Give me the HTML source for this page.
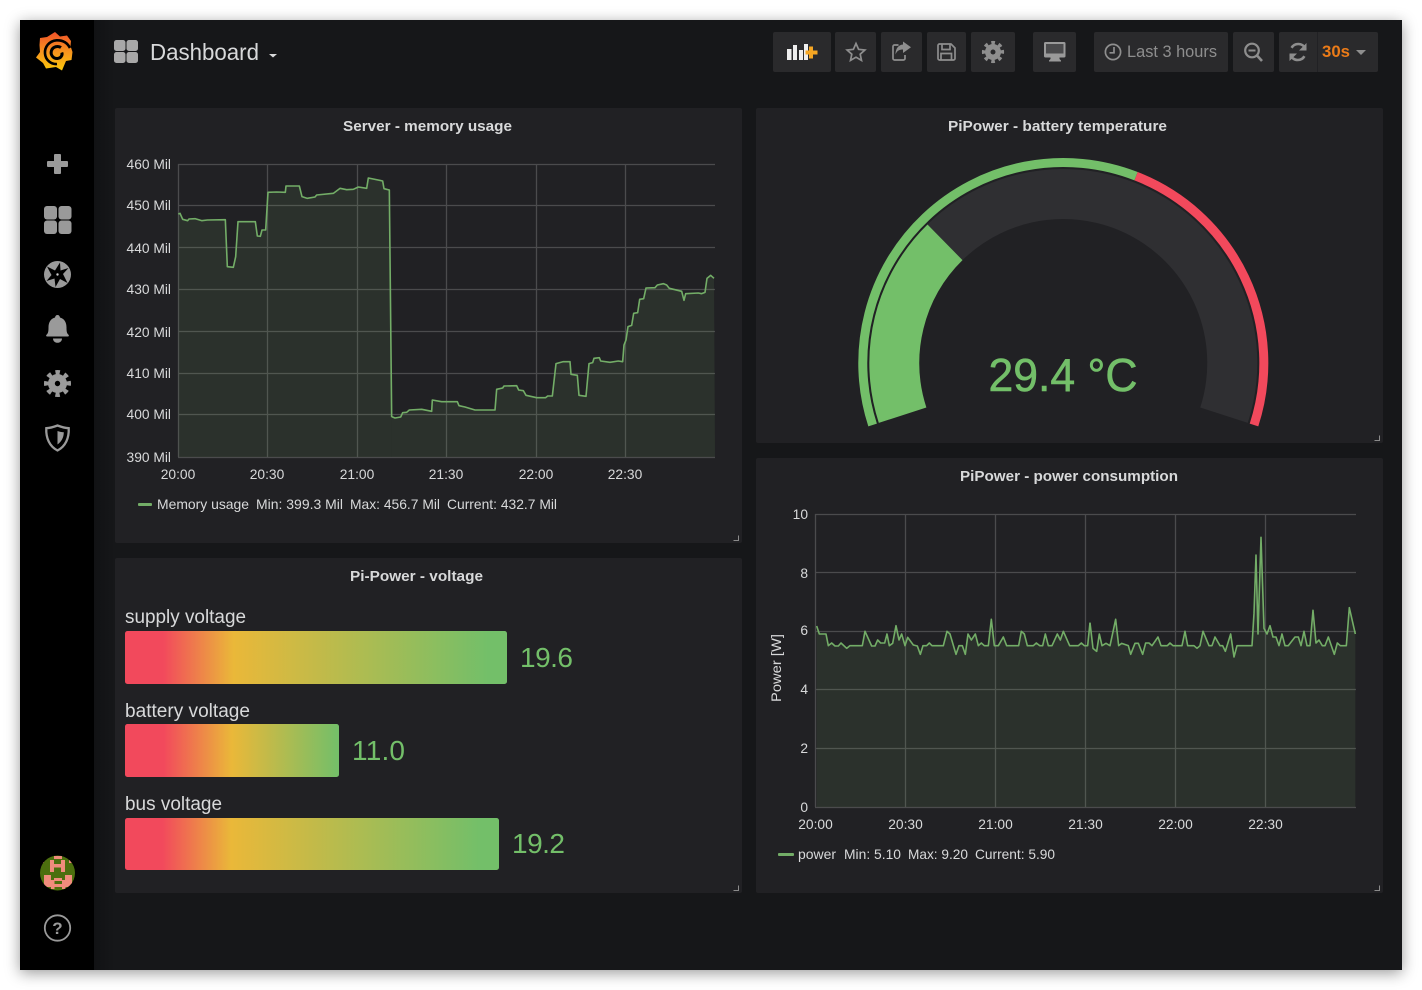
<!DOCTYPE html>
<html><head><meta charset="utf-8"><title>Dashboard</title>
<style>
html,body{margin:0;padding:0;background:#fff;width:1422px;height:990px;overflow:hidden}
#w{position:absolute;left:20px;top:20px;width:1382px;height:950px;background:#161719;box-shadow:0 3px 14px rgba(0,0,0,.4)}
svg{position:absolute;left:0;top:0;font-family:"Liberation Sans",sans-serif}
.t{font-size:15px;font-weight:bold;fill:#d8d9da;text-anchor:middle}
.a{font-size:13.8px;fill:#d8d9da}
.e{text-anchor:end}.m{text-anchor:middle}
.g{stroke:#4b4b4d;stroke-width:1.3;fill:none}
.l{fill:none;stroke:#73ad67;stroke-width:1.6;vector-effect:non-scaling-stroke;stroke-linejoin:round}
.f{fill:#7eb26d;fill-opacity:.11;stroke:none}
.b{fill:#2a2a2c}
.i{fill:#9a9a9a}
.o{fill:none;stroke:#8e8e8e;stroke-width:1.7}
.h{fill:none;stroke:#8a8a8a;stroke-width:1}
</style></head><body>
<div id="w"></div>
<svg width="1422" height="990" viewBox="0 0 1422 990">
<defs>
<linearGradient id="lg" gradientUnits="userSpaceOnUse" x1="0" y1="32" x2="0" y2="71"><stop offset="0" stop-color="#f0522a"/><stop offset=".5" stop-color="#f7931e"/><stop offset="1" stop-color="#fbca0a"/></linearGradient>
<linearGradient id="sb"><stop offset="0" stop-color="#111214"/><stop offset="1" stop-color="#161719"/></linearGradient>
<linearGradient id="b1"><stop offset="0" stop-color="#f2495c"/><stop offset=".1" stop-color="#f2495c"/><stop offset=".284" stop-color="#eab839"/><stop offset=".95" stop-color="#73bf69"/><stop offset="1" stop-color="#73bf69"/></linearGradient>
<linearGradient id="b2"><stop offset="0" stop-color="#f2495c"/><stop offset=".18" stop-color="#f2495c"/><stop offset=".5" stop-color="#eab839"/><stop offset="1" stop-color="#73bf69"/></linearGradient>
<clipPath id="av"><circle cx="57.5" cy="873" r="17.5"/></clipPath>
</defs>

<rect x="20" y="20" width="74" height="950" fill="#000"/>
<rect x="94" y="20" width="21" height="950" fill="url(#sb)"/>

<!-- logo -->
<polygon fill="url(#lg)" points="55,32 60,36.5 67,35.500 71,41 70.500,46 72.500,52 71.500,60 66,61 62,70.500 56,67 46,68.500 43,63 36,57.500 40,52 39.500,45 40,38 47,37"/>
<path d="M70 48C67 42 62 40 56.500 40.300C49 41 44.500 47 45 53.500C45.500 60 51 64.500 57 64" fill="none" stroke="#000" stroke-width="2.600"/>
<path d="M61 47.500C58 45.500 53 46.500 51.500 50.500C50 55 53.500 58.800 57.500 58.500C61 58.200 62.800 55 61.800 52.500" fill="none" stroke="#000" stroke-width="3"/>

<!-- sidebar icons -->
<path class="i" d="M55 154h5a1 1 0 0 1 1 1v6h6a1 1 0 0 1 1 1v4a1 1 0 0 1-1 1h-6v6a1 1 0 0 1-1 1h-5a1 1 0 0 1-1-1v-6h-6a1 1 0 0 1-1-1v-4a1 1 0 0 1 1-1h6v-6a1 1 0 0 1 1-1z"/>
<g class="i"><rect x="44" y="206" width="13" height="13.500" rx="3"/><rect x="58.500" y="206" width="13" height="13.500" rx="3"/><rect x="44" y="220.500" width="13" height="13.500" rx="3"/><rect x="58.500" y="220.500" width="13" height="13.500" rx="3"/></g>
<circle class="i" cx="57.500" cy="274.500" r="13.500"/>
<path fill="#000" d="M60 262.500L60.500 270.500 68.500 268 63 274 67.500 283 60 279 55.500 287 54.500 278.500 46.500 281 51.500 275 47 266.500 55 270.500z"/>
<circle cx="57.500" cy="274.500" r="1.200" fill="#ccc"/>
<path class="i" d="M57.500 315c-1.500 0-2.200 1-2.500 2.500-4.500 1.200-6.500 5-6.500 10 0 3.500-.3 5.500-1.500 6.800-.8.800-1 1.400-.8 1.700.2.400.7.500 1.300.5h20c.6 0 1.100-.1 1.300-.5.200-.3 0-.9-.8-1.700-1.200-1.300-1.500-3.300-1.500-6.800 0-5-2-8.800-6.500-10-.3-1.500-1-2.500-2.500-2.500z"/>
<path class="i" d="M53 338.500h9c0 2.600-2 4.300-4.500 4.300s-4.500-1.700-4.500-4.300z"/>
<circle class="i" cx="57.500" cy="383.500" r="9.500"/>
<circle cx="57.500" cy="383.500" r="11.200" fill="none" stroke="#9a9a9a" stroke-width="4.600" stroke-dasharray="4.300 4.500"  transform="rotate(-12 57.500 383.500)"/>
<circle cx="57.500" cy="383.500" r="2.700" fill="#000"/>
<path d="M57.500 425.500C53 427.200 50 428 46.300 428.200C45.800 438 49.500 446.500 57.500 450.500C65.500 446.500 69.200 438 68.700 428.200C65 428 62 427.200 57.500 425.500Z" fill="none" stroke="#9a9a9a" stroke-width="2.300"/>
<path class="i" d="M57.500 431v13.500c4-2.800 6.300-7 6.300-12.200-2.300-.2-4.300-.6-6.300-1.300z"/>
<circle cx="57.500" cy="873" r="17.500" fill="#4c6f0e"/>
<g clip-path="url(#av)" fill="#f08c7c">
<rect x="50" y="860" width="4" height="12"/><rect x="61" y="860" width="4" height="12"/><rect x="50" y="864" width="15" height="3.500"/>
<rect x="44" y="875" width="7" height="12"/><rect x="65" y="875" width="7" height="12"/>
<rect x="51" y="880" width="3.500" height="9"/><rect x="54" y="878" width="8" height="3"/><rect x="54" y="884" width="8" height="3"/><rect x="62" y="880" width="3.500" height="9"/>
<rect x="40" y="860" width="4" height="3"/><rect x="69" y="860" width="5" height="3"/><rect x="54" y="856" width="8" height="3"/>
</g>
<circle cx="57.500" cy="928" r="12.700" fill="none" stroke="#9a9a9a" stroke-width="1.800"/>
<text x="57.500" y="934" font-size="17" font-weight="bold" fill="#9a9a9a" text-anchor="middle">?</text>

<!-- header -->
<g fill="#a8a8a8"><rect x="114" y="40" width="11.500" height="11" rx="2.500"/><rect x="126.500" y="40" width="11.500" height="11" rx="2.500"/><rect x="114" y="52" width="11.500" height="11" rx="2.500"/><rect x="126.500" y="52" width="11.500" height="11" rx="2.500"/></g>
<text x="150" y="60" font-size="23" fill="#d8d9da" textLength="109" lengthAdjust="spacingAndGlyphs">Dashboard</text>
<path d="M269 54h8l-4 3.500z" fill="#d8d9da"/>

<g class="b">
<rect x="773" y="32" width="58" height="40" rx="2"/>
<rect x="835" y="32" width="41" height="40" rx="2"/>
<rect x="881" y="32" width="41" height="40" rx="2"/>
<rect x="927" y="32" width="39" height="40" rx="2"/>
<rect x="971" y="32" width="44" height="40" rx="2"/>
<rect x="1033" y="32" width="43" height="40" rx="2"/>
<rect x="1094" y="32" width="134" height="40" rx="2"/>
<rect x="1233" y="32" width="41" height="40" rx="2"/>
<rect x="1279" y="32" width="99" height="40" rx="2"/>
</g>
<rect x="1317" y="32" width="1" height="40" fill="#212124"/>
<g fill="#eee"><rect x="787" y="49" width="4.500" height="11"/><rect x="793" y="45" width="4" height="15"/><rect x="799" y="50" width="4" height="10"/><rect x="804" y="44" width="4" height="16"/></g>
<path fill="#f5a623" d="M809 46.500h4v4h4.500v4h-4.500v4h-4v-4h-3.500v-4h3.500z"/>
<path class="o" d="M856 43.500l2.600 5.800 6.300.7-4.700 4.200 1.300 6.200-5.500-3.200-5.500 3.200 1.300-6.200-4.700-4.200 6.300-.7z" stroke-width="1.400"/>
<path class="o" d="M905 55v3.500a1.500 1.500 0 0 1-1.500 1.500h-9a1.500 1.500 0 0 1-1.500-1.500v-12a1.500 1.500 0 0 1 1.500-1.500h4"/>
<path fill="#8e8e8e" d="M903 41.500l8 5.800-8 5.700v-3.500c-3.500 0-6 1-7.500 5 0-6 3-9.700 7.500-10z"/>
<path class="o" d="M939 44h12l4 4v10.500a1.500 1.500 0 0 1-1.500 1.500h-14a1.500 1.500 0 0 1-1.500-1.500v-13a1.500 1.500 0 0 1 1.500-1.500z"/>
<path class="o" d="M942 44v5.500h8v-5.500M941 60v-6.500h10.500v6.500"/>
<circle cx="993" cy="52" r="8" fill="#8e8e8e"/>
<circle cx="993" cy="52" r="9.200" fill="none" stroke="#8e8e8e" stroke-width="3.800" stroke-dasharray="3.500 3.730" transform="rotate(-12 993 52)"/>
<circle cx="993" cy="52" r="2.500" fill="#2a2a2c"/>
<rect x="1044" y="42" width="21.500" height="15.500" rx="1.500" fill="#9a9a9a"/>
<rect x="1046" y="44" width="17.500" height="9.500" fill="#4a4a4c"/>
<path d="M1050.500 57.500h9v2l1.500 1.500v1h-12v-1l1.500-1.500z" fill="#9a9a9a" transform="translate(0 -.5)"/>
<circle class="o" cx="1113" cy="52" r="7.600"/>
<path class="o" d="M1114 47v5.800h-4.500"/>
<text x="1127" y="57" font-size="16.500" fill="#8e8e8e" textLength="90" lengthAdjust="spacingAndGlyphs">Last 3 hours</text>
<circle cx="1252" cy="50.500" r="6.800" fill="none" stroke="#8e8e8e" stroke-width="2.200"/>
<path d="M1248.500 50.500h7" stroke="#8e8e8e" stroke-width="2"/><path d="M1257 55.500l5 5.500" stroke="#8e8e8e" stroke-width="2.600"/>
<path d="M1305.500 49c-1.200-3-4-5-7.300-5-3 0-5.300 1.500-6.600 3.800M1290.500 55c1.200 3 4 5 7.300 5 3 0 5.300-1.500 6.600-3.800" fill="none" stroke="#8e8e8e" stroke-width="2.600"/>
<path d="M1306.500 43v7.500h-7.500zM1289.500 61v-7.500h7.500z" fill="#8e8e8e"/>
<text x="1322" y="57" font-size="16.500" font-weight="bold" fill="#eb7b18" textLength="28" lengthAdjust="spacingAndGlyphs">30s</text>
<path d="M1356 50h10l-5 5z" fill="#8e8e8e"/>

<!-- panels -->
<g fill="#212124">
<rect x="115" y="108" width="627" height="435" rx="2"/>
<rect x="756" y="108" width="627" height="335" rx="2"/>
<rect x="115" y="558" width="627" height="335" rx="2"/>
<rect x="756" y="458" width="627" height="435" rx="2"/>
</g>
<path class="h" d="M733.500 540.500h5v-5M1374.500 440.500h5v-5M733.500 890.500h5v-5M1374.500 890.500h5v-5"/>
<text class="t" x="427.500" y="131" textLength="169" lengthAdjust="spacingAndGlyphs">Server - memory usage</text>
<text class="t" x="1057.500" y="131" textLength="219" lengthAdjust="spacingAndGlyphs">PiPower - battery temperature</text>
<text class="t" x="416.500" y="581" textLength="133" lengthAdjust="spacingAndGlyphs">Pi-Power - voltage</text>
<text class="t" x="1069" y="481" textLength="218" lengthAdjust="spacingAndGlyphs">PiPower - power consumption</text>

<!-- graph 1 -->
<path class="g" d="M178 164.500H715M178 205.500H715M178 247.500H715M178 289.500H715M178 331.500H715M178 373.500H715M178 414.500H715M178 457.500H715M178.500 164V457M267.500 164V457M357.500 164V457M446.500 164V457M536.500 164V457M625.500 164V457"/>
<g transform="translate(120 150) scale(.33333)">
<polygon class="f" points="175,192 180,190 188,208 203,212 207,207 225,206 245,212 262,210 316,209 322,350 340,352 347,320 354,215 406,215 412,258 421,259 426,240 437,240 444,127 470,126 496,127 498,108 538,108 546,140 562,145 585,141 590,135 640,130 660,115 680,119 700,118 715,111 740,115 745,84 788,93 792,116 808,120 815,801 815,921 175,921"/>
<polyline class="l" points="175,192 180,190 188,208 203,212 207,207 225,206 245,212 262,210 316,209 322,350 340,352 347,320 354,215 406,215 412,258 421,259 426,240 437,240 444,127 470,126 496,127 498,108 538,108 546,140 562,145 585,141 590,135 640,130 660,115 680,119 700,118 715,111 740,115 745,84 788,93 792,116 808,120 815,801"/>
</g>
<g transform="translate(380 260) scale(.33333)">
<polygon class="f" points="35,470 45,474 62,471 68,458 80,457 88,450 125,448 155,454 157,420 185,425 232,425 237,437 255,441 285,450 345,450 350,388 368,384 372,378 410,377 416,390 430,392 438,406 470,413 497,413 503,408 517,408 528,311 550,305 570,305 573,343 592,346 597,406 618,409 627,311 638,308 642,295 658,293 662,303 690,307 715,303 728,305 732,255 738,240 744,200 755,196 761,160 773,158 779,118 791,116 798,84 825,83 832,75 850,71 860,75 868,85 905,94 912,121 917,101 955,99 965,101 975,97 981,55 992,46 1002,55 1005,591 35,591"/>
<polyline class="l" points="35,470 45,474 62,471 68,458 80,457 88,450 125,448 155,454 157,420 185,425 232,425 237,437 255,441 285,450 345,450 350,388 368,384 372,378 410,377 416,390 430,392 438,406 470,413 497,413 503,408 517,408 528,311 550,305 570,305 573,343 592,346 597,406 618,409 627,311 638,308 642,295 658,293 662,303 690,307 715,303 728,305 732,255 738,240 744,200 755,196 761,160 773,158 779,118 791,116 798,84 825,83 832,75 850,71 860,75 868,85 905,94 912,121 917,101 955,99 965,101 975,97 981,55 992,46 1002,55"/>
</g>
<g class="a e">
<text x="171" y="169">460 Mil</text><text x="171" y="210">450 Mil</text><text x="171" y="253">440 Mil</text><text x="171" y="294">430 Mil</text><text x="171" y="337">420 Mil</text><text x="171" y="378">410 Mil</text><text x="171" y="419">400 Mil</text><text x="171" y="462">390 Mil</text>
</g>
<g class="a m">
<text x="178" y="479">20:00</text><text x="267" y="479">20:30</text><text x="357" y="479">21:00</text><text x="446" y="479">21:30</text><text x="536" y="479">22:00</text><text x="625" y="479">22:30</text>
</g>
<rect x="138" y="503" width="14" height="3" rx="1" fill="#73ad67"/>
<g class="a">
<text x="157" y="509" textLength="92" lengthAdjust="spacingAndGlyphs">Memory usage</text><text x="256" y="509" textLength="87" lengthAdjust="spacingAndGlyphs">Min: 399.3 Mil</text><text x="350" y="509" textLength="90" lengthAdjust="spacingAndGlyphs">Max: 456.7 Mil</text><text x="447" y="509" textLength="110" lengthAdjust="spacingAndGlyphs">Current: 432.7 Mil</text>
</g>

<!-- gauge -->
<path d="M872.600 425A200.500 200.500 0 0 1 1136.100 176.200" fill="none" stroke="#73bf69" stroke-width="9"/>
<path d="M1136.100 176.200A200.500 200.500 0 0 1 1254 425" fill="none" stroke="#f2495c" stroke-width="9"/>
<path d="M945 242.300A169 169 0 0 1 1224 415.200" fill="none" stroke="#2f2f32" stroke-width="50"/>
<path d="M902.600 415.200A169 169 0 0 1 945 242.300" fill="none" stroke="#73bf69" stroke-width="50"/>
<text x="1063" y="391" font-size="46" fill="#73bf69" stroke="#73bf69" stroke-width=".6" text-anchor="middle" textLength="149" lengthAdjust="spacingAndGlyphs">29.4 °C</text>

<!-- bars -->
<text x="125" y="623" font-size="19" fill="#d8d9da" textLength="121" lengthAdjust="spacingAndGlyphs">supply voltage</text>
<rect x="125" y="631" width="382" height="53" rx="2.500" fill="url(#b1)"/>
<text x="520" y="667" font-size="28" fill="#73bf69" textLength="53">19.6</text>
<text x="125" y="717" font-size="19" fill="#d8d9da" textLength="125" lengthAdjust="spacingAndGlyphs">battery voltage</text>
<rect x="125" y="724" width="214" height="53" rx="2.500" fill="url(#b2)"/>
<text x="352" y="760" font-size="28" fill="#73bf69" textLength="53">11.0</text>
<text x="125" y="810" font-size="19" fill="#d8d9da" textLength="97" lengthAdjust="spacingAndGlyphs">bus voltage</text>
<rect x="125" y="818" width="374" height="52" rx="2.500" fill="url(#b1)"/>
<text x="512" y="853" font-size="28" fill="#73bf69" textLength="53">19.2</text>

<!-- graph 2 -->
<path class="g" d="M815 514.500H1356M815 572.500H1356M815 631.500H1356M815 689.500H1356M815 748.500H1356M815 807.500H1356M815.500 514V807M905.500 514V807M995.500 514V807M1085.500 514V807M1175.500 514V807M1265.500 514V807"/>
<g transform="translate(810 530) scale(.33333)">
<polygon class="f" points="20,288 28,312 48,312 55,347 65,339 75,348 85,348 93,339 110,355 120,347 157,347 165,304 185,348 195,348 203,330 212,339 224,339 231,312 238,347 248,340 258,287 267,330 275,312 285,347 293,322 310,345 322,348 331,373 339,347 350,347 358,339 366,347 400,347 411,304 420,312 438,373 447,347 457,347 466,373 474,312 484,330 496,312 505,347 514,339 523,347 535,347 544,268 553,347 565,347 580,321 590,347 626,347 634,304 643,312 652,347 670,347 679,339 689,347 698,347 706,312 715,347 726,347 742,312 751,330 760,304 779,347 805,347 814,339 823,347 833,347 840,278 840,831 20,831"/>
<polyline class="l" points="20,288 28,312 48,312 55,347 65,339 75,348 85,348 93,339 110,355 120,347 157,347 165,304 185,348 195,348 203,330 212,339 224,339 231,312 238,347 248,340 258,287 267,330 275,312 285,347 293,322 310,345 322,348 331,373 339,347 350,347 358,339 366,347 400,347 411,304 420,312 438,373 447,347 457,347 466,373 474,312 484,330 496,312 505,347 514,339 523,347 535,347 544,268 553,347 565,347 580,321 590,347 626,347 634,304 643,312 652,347 670,347 679,339 689,347 698,347 706,312 715,347 726,347 742,312 751,330 760,304 779,347 805,347 814,339 823,347 833,347 840,278"/>
</g>
<g transform="translate(1080 530) scale(.33333)">
<polygon class="f" points="30,278 39,355 50,364 58,312 66,347 78,340 90,347 107,268 116,347 125,340 145,347 152,373 165,340 175,340 188,373 197,339 207,339 216,347 234,321 243,347 262,347 270,339 279,347 306,347 315,304 323,347 342,347 351,355 360,347 369,304 387,347 396,347 405,321 420,347 428,347 436,364 452,312 462,381 471,347 516,347 522,250 528,75 534,312 543,22 552,295 561,312 570,287 579,321 588,321 597,347 606,312 615,347 625,347 645,321 655,321 663,347 672,304 681,347 690,347 699,241 708,339 717,330 727,347 735,347 745,321 763,373 772,339 781,347 799,347 808,233 826,312 826,831 30,831"/>
<polyline class="l" points="30,278 39,355 50,364 58,312 66,347 78,340 90,347 107,268 116,347 125,340 145,347 152,373 165,340 175,340 188,373 197,339 207,339 216,347 234,321 243,347 262,347 270,339 279,347 306,347 315,304 323,347 342,347 351,355 360,347 369,304 387,347 396,347 405,321 420,347 428,347 436,364 452,312 462,381 471,347 516,347 522,250 528,75 534,312 543,22 552,295 561,312 570,287 579,321 588,321 597,347 606,312 615,347 625,347 645,321 655,321 663,347 672,304 681,347 690,347 699,241 708,339 717,330 727,347 735,347 745,321 763,373 772,339 781,347 799,347 808,233 826,312"/>
</g>
<g class="a e">
<text x="808" y="519">10</text><text x="808" y="578">8</text><text x="808" y="635">6</text><text x="808" y="694">4</text><text x="808" y="753">2</text><text x="808" y="812">0</text>
</g>
<g class="a m">
<text x="815.500" y="829">20:00</text><text x="905.500" y="829">20:30</text><text x="995.500" y="829">21:00</text><text x="1085.500" y="829">21:30</text><text x="1175.500" y="829">22:00</text><text x="1265.500" y="829">22:30</text>
</g>
<text class="a m" transform="translate(781 668) rotate(-90)" textLength="68" lengthAdjust="spacingAndGlyphs">Power [W]</text>
<rect x="778" y="853" width="16" height="3" rx="1" fill="#73ad67"/>
<g class="a">
<text x="798" y="859" textLength="38" lengthAdjust="spacingAndGlyphs">power</text><text x="844" y="859" textLength="57" lengthAdjust="spacingAndGlyphs">Min: 5.10</text><text x="908" y="859" textLength="60" lengthAdjust="spacingAndGlyphs">Max: 9.20</text><text x="975" y="859" textLength="80" lengthAdjust="spacingAndGlyphs">Current: 5.90</text>
</g>
</svg>
</body></html>
